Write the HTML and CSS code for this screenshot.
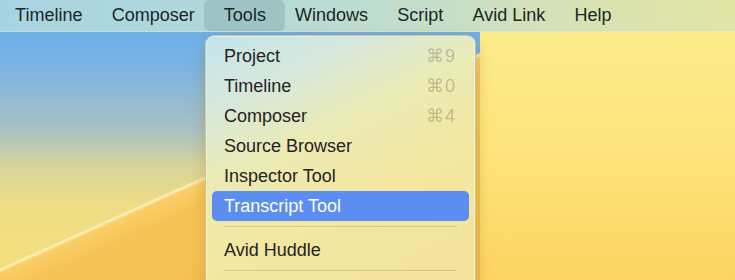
FILE: index.html
```html
<!DOCTYPE html>
<html lang="en">
<head>
<meta charset="utf-8">
<title>Tools menu</title>
<link rel="stylesheet" href="styles.css">
</head>
<body>
<div class="screen">
  <nav class="menubar">
    <span class="bar-item">Timeline</span>
    <span class="bar-item">Composer</span>
    <span class="bar-item active">Tools</span>
    <span class="bar-item">Windows</span>
    <span class="bar-item">Script</span>
    <span class="bar-item">Avid Link</span>
    <span class="bar-item">Help</span>
  </nav>
  <div class="desktop"></div>
  <div class="menu">
    <div class="menu-item"><span>Project</span><span class="shortcut">⌘9</span></div>
    <div class="menu-item"><span>Timeline</span><span class="shortcut">⌘0</span></div>
    <div class="menu-item"><span>Composer</span><span class="shortcut">⌘4</span></div>
    <div class="menu-item"><span>Source Browser</span></div>
    <div class="menu-item"><span>Inspector Tool</span></div>
    <div class="menu-item selected"><span>Transcript Tool</span></div>
    <div class="separator"></div>
    <div class="menu-item"><span>Avid Huddle</span></div>
    <div class="separator"></div>
  </div>
</div>
</body>
</html>
```
FILE: styles.css
```css
html, body {
  margin: 0;
  padding: 0;
}
body {
  width: 735px;
  height: 280px;
  overflow: hidden;
  font-family: "Liberation Sans", Arial, sans-serif;
}
.screen {
  position: relative;
  width: 735px;
  height: 280px;
  overflow: hidden;
  display: flex;
  flex-direction: column;
}
.menubar {
  height: 32px;
  flex: none;
  display: flex;
  align-items: stretch;
  padding-left: 0.5px;
  background: linear-gradient(90deg, #a7d4e2 0%, #b2d9d9 35%, #c6dfc8 60%, #d8e2b2 80%, #e2e4a4 100%);
  box-shadow: inset 0 -1px 0 rgba(255,255,255,0.25);
}
.bar-item {
  padding: 0 14.6px 2px;
  line-height: 30px;
  font-size: 18px;
  color: #1b2626;
  white-space: nowrap;
}
.bar-item.active {
  padding: 0 19.6px 2px;
  margin: 0 -5px 1px;
  border-radius: 6px;
  background: rgba(60, 95, 95, 0.17);
}
.desktop {
  flex: 1;
  background:
    linear-gradient(155.8deg, rgba(246,224,123,0) 215px, rgba(255,240,195,0.95) 217px, #f9cf68 220px, #f6c456 240px, #f4bd4e 100%) 0 0 / 480px 248px no-repeat,
    linear-gradient(180deg, #70aee8 0px, #78b3e4 30px, #a6c1c6 95px, #d8d59a 135px, #efdd84 175px, #f6e07b 248px) 0 0 / 480px 100% no-repeat,
    linear-gradient(180deg, #fdec8c 0%, #fde47c 45%, #fdd462 100%);
}
.menu {
  position: absolute;
  left: 205px;
  top: 35px;
  width: 257px;
  padding: 5px 6px 40px;
  border: 1px solid rgba(90, 90, 60, 0.22);
  border-radius: 9px;
  background: linear-gradient(155deg, #c4e3ec 0%, #d6e8dc 18%, #ebebb6 36%, #f3e7a2 55%, #f2e299 100%);
  box-shadow: inset 0 0 0 1px rgba(255,255,255,0.35), 0 6px 16px rgba(150, 100, 0, 0.28);
}
.menu-item {
  height: 30px;
  line-height: 30px;
  padding: 0 13px 0 12px;
  display: flex;
  justify-content: space-between;
  font-size: 18px;
  color: #24241f;
  border-radius: 5px;
  white-space: nowrap;
}
.menu-item.selected {
  background: #5b8ef0;
  color: #ffffff;
}
.shortcut {
  font-family: "Liberation Sans", "DejaVu Sans", sans-serif;
  color: rgba(70, 70, 40, 0.3);
  letter-spacing: 1px;
}
.separator {
  height: 1px;
  margin: 5px 12px 8px;
  background: rgba(90, 80, 30, 0.18);
}
```
